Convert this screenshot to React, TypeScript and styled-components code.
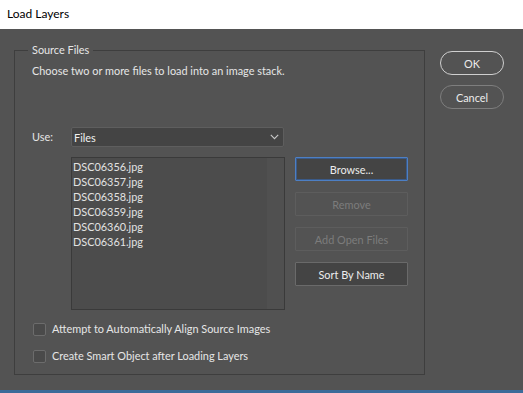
import React from "react";
import styled, { createGlobalStyle } from "styled-components";

const Global = createGlobalStyle`
  html, body { margin: 0; padding: 0; background: #535353; }
  body { font-family: Lato, "Segoe UI", Arial, sans-serif; font-size: 10.9px; }
  * { box-sizing: border-box; }
`;

const Window = styled.div`
  width: 523px;
  height: 393px;
  display: flex;
  flex-direction: column;
  overflow: hidden;
`;

const TitleBar = styled.div`
  height: 30px;
  background: #ffffff;
  color: #000;
  font-size: 12px;
  line-height: 30px;
  padding: 0 0 0 7px;
  margin-top: -1px;
`;

const Body = styled.div`
  flex: 1;
  background: #535353;
  display: flex;
  align-items: flex-start;
  padding: 21px 0 0 14px;
  gap: 15px;
`;

const BottomStrip = styled.div`
  height: 3px;
  background: #3b6b99;
`;

const Group = styled.div`
  position: relative;
  width: 411px;
  height: 325px;
  border: 1px solid #3e3e3e;
  padding: 12px 0 0 17px;
  display: flex;
  flex-direction: column;
  color: #e6e6e6;
`;

const Legend = styled.div`
  position: absolute;
  top: -9px;
  left: 13px;
  padding: 0 4px;
  background: #535353;
  line-height: 16px;
  color: #e6e6e6;
`;

const Description = styled.div`
  line-height: 16px;
`;

const UseRow = styled.div`
  display: flex;
  align-items: center;
  margin-top: 48px;
  height: 20px;
`;

const UseLabel = styled.div`
  width: 39px;
  line-height: 16px;
`;

const Select = styled.div`
  width: 213px;
  height: 20px;
  background: #444444;
  border: 1px solid #5e5e5e;
  border-radius: 2px;
  display: flex;
  align-items: center;
  justify-content: space-between;
  padding: 0 4px 0 2px;
  color: #f0f0f0;
`;

const FilesRow = styled.div`
  display: flex;
  align-items: flex-start;
  margin-top: 10px;
  margin-left: 39px;
  gap: 10px;
`;

const List = styled.div`
  width: 214px;
  height: 153px;
  border: 1px solid #3a3a3a;
  background: linear-gradient(to right, #4c4c4c 0, #4c4c4c 195px, #505050 195px);
  padding: 1px 0 0 1px;
  display: flex;
  flex-direction: column;
`;

const ListItem = styled.div`
  line-height: 15px;
  height: 15px;
  color: #e2e2e2;
`;

const ButtonCol = styled.div`
  display: flex;
  flex-direction: column;
  gap: 11px;
`;

const SideButton = styled.div<{ $variant: "focus" | "disabled" | "normal" }>`
  width: 113px;
  height: 24px;
  display: flex;
  align-items: center;
  justify-content: center;
  border-radius: 1px;
  border: 1px solid
    ${(p) => (p.$variant === "focus" ? "#4d7fc4" : p.$variant === "disabled" ? "#5d5d5d" : "#6a6a6a")};
  box-shadow: ${(p) => (p.$variant === "focus" ? "inset 0 0 0 1px #3a5a88" : "none")};
  background: ${(p) => (p.$variant === "disabled" ? "#535353" : "#444444")};
  color: ${(p) => (p.$variant === "disabled" ? "#7c7c7c" : "#ececec")};
`;

const CheckList = styled.div`
  display: flex;
  flex-direction: column;
  gap: 13px;
  margin-top: 12px;
  margin-left: 1px;
`;

const CheckRow = styled.label`
  display: flex;
  align-items: center;
  gap: 6px;
  height: 14px;
  line-height: 16px;
`;

const Box = styled.span`
  width: 13px;
  height: 13px;
  border: 1px solid #6c6c6c;
  border-radius: 2px;
  background: #4a4a4a;
`;

const RightCol = styled.div`
  display: flex;
  flex-direction: column;
  gap: 10px;
  margin-top: 1px;
`;

const PillButton = styled.div<{ $primary?: boolean }>`
  width: 64px;
  height: 24px;
  border-radius: 12px;
  border: ${(p) => (p.$primary ? "1.5px solid #cfcfcf" : "1px solid #7e7e7e")};
  display: flex;
  align-items: center;
  justify-content: center;
  color: #ececec;
`;

const files = [
  "DSC06356.jpg",
  "DSC06357.jpg",
  "DSC06358.jpg",
  "DSC06359.jpg",
  "DSC06360.jpg",
  "DSC06361.jpg",
];

export default function App() {
  return (
    <Window>
      <Global />
      <TitleBar>Load Layers</TitleBar>
      <Body>
        <Group>
          <Legend>Source Files</Legend>
          <Description>Choose two or more files to load into an image stack.</Description>
          <UseRow>
            <UseLabel>Use:</UseLabel>
            <Select>
              <span>Files</span>
              <svg width="9" height="6" viewBox="0 0 9 6">
                <path d="M0.8 0.8 L4.5 4.6 L8.2 0.8" fill="none" stroke="#c8c8c8" strokeWidth="1.1" />
              </svg>
            </Select>
          </UseRow>
          <FilesRow>
            <List>
              {files.map((f) => (
                <ListItem key={f}>{f}</ListItem>
              ))}
            </List>
            <ButtonCol>
              <SideButton $variant="focus">Browse...</SideButton>
              <SideButton $variant="disabled">Remove</SideButton>
              <SideButton $variant="disabled">Add Open Files</SideButton>
              <SideButton $variant="normal">Sort By Name</SideButton>
            </ButtonCol>
          </FilesRow>
          <CheckList>
            <CheckRow>
              <Box />
              <span>Attempt to Automatically Align Source Images</span>
            </CheckRow>
            <CheckRow>
              <Box />
              <span>Create Smart Object after Loading Layers</span>
            </CheckRow>
          </CheckList>
        </Group>
        <RightCol>
          <PillButton $primary>OK</PillButton>
          <PillButton>Cancel</PillButton>
        </RightCol>
      </Body>
      <BottomStrip />
    </Window>
  );
}
